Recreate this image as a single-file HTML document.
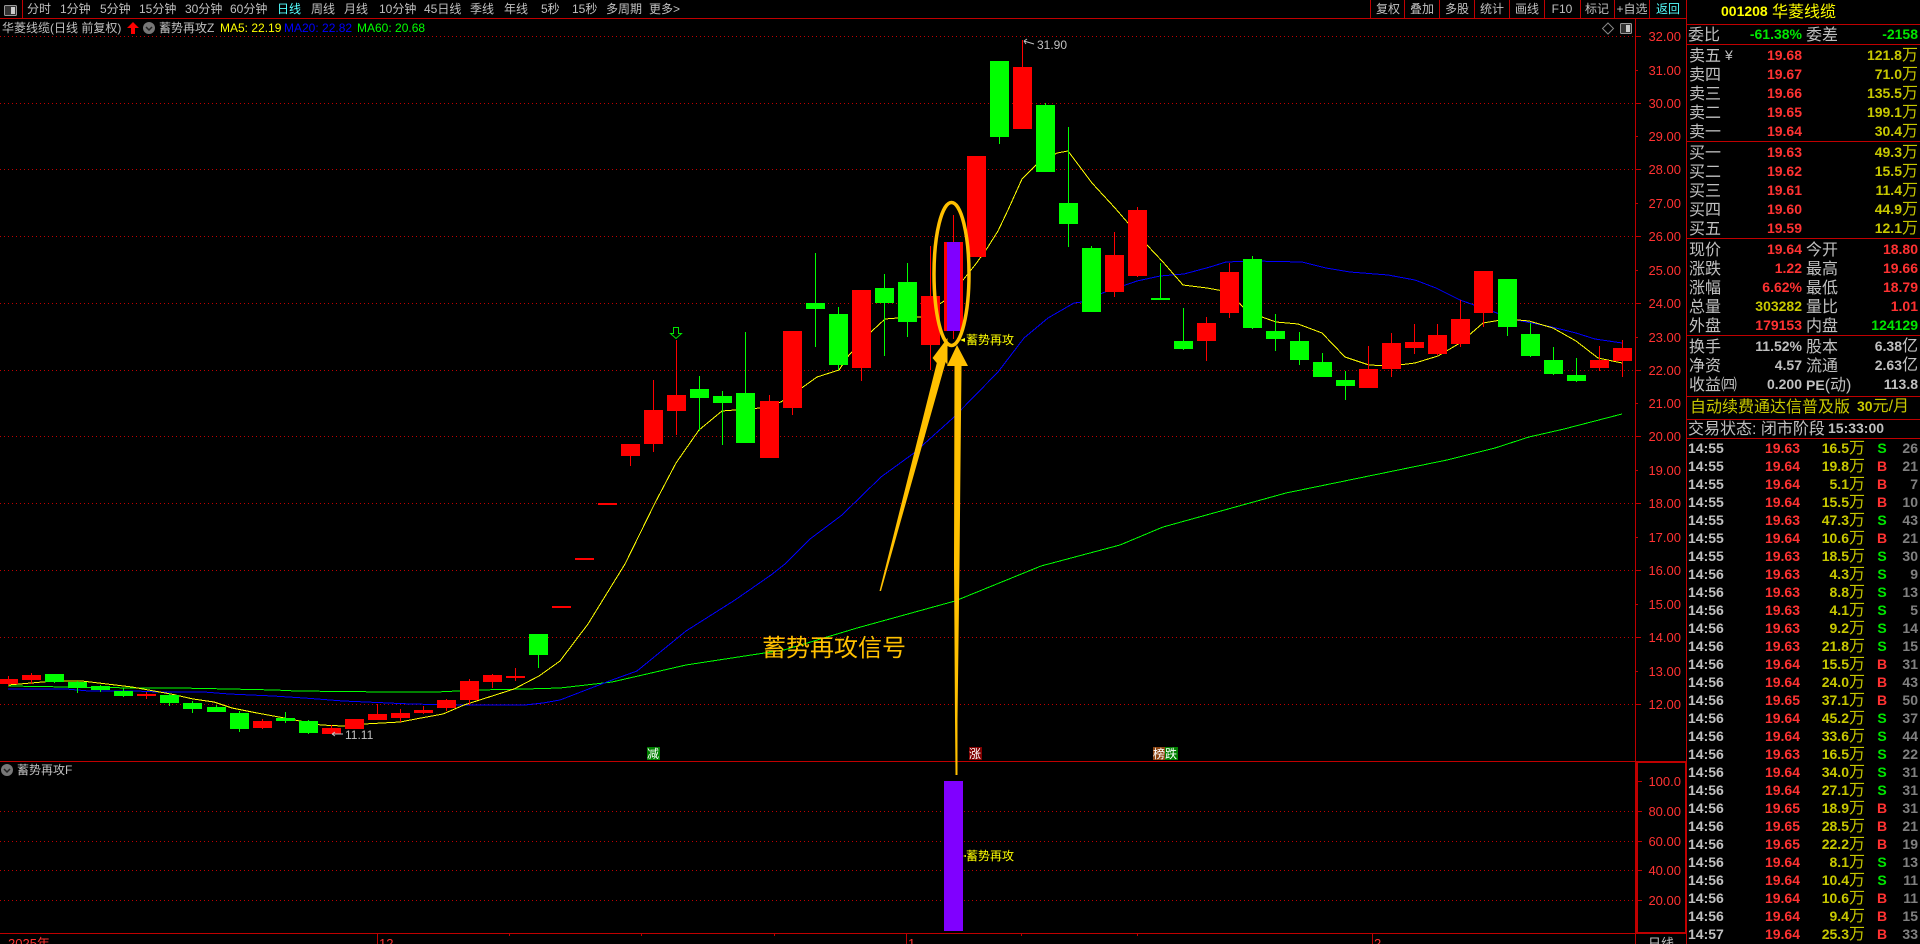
<!DOCTYPE html>
<html><head><meta charset="utf-8"><title>华菱线缆</title>
<style>
html,body{margin:0;padding:0;background:#000;width:1920px;height:944px;overflow:hidden}
svg{position:absolute;left:0;top:0}
text{font-family:"Liberation Sans","WenQuanYi Zen Hei","Noto Sans CJK SC",sans-serif}
.tab{font-size:12px;fill:#c0c0c0}
.ax{font-size:13px;fill:#ff3232;text-anchor:end}
.lb{font-size:16px;fill:#c0c0c0}
.d{font-size:14px;font-weight:bold;text-anchor:end}
.c{text-anchor:middle}
.r{fill:#ff3232}.g{fill:#00e600}.y{fill:#c8c800}.w{fill:#c0c0c0}
.u{font-size:16px;font-weight:normal}
#ticks{position:absolute;left:1688px;top:439px;width:232px;font:bold 14px/18px "Liberation Sans","WenQuanYi Zen Hei",sans-serif}
#ticks div{position:relative;height:18px}
#ticks span{position:absolute;top:0;white-space:nowrap}
.t{left:0;color:#c0c0c0}
.p{right:120px;color:#ff3232}
.q{right:55px;color:#c8c800}
.q small{font-size:16px;font-weight:normal}
.B,.S{left:189px;width:10px;text-align:center}
.B{color:#ff3232}.S{color:#00e600}
.n{right:2px;color:#808080}
</style></head><body>
<svg width="1920" height="944" viewBox="0 0 1920 944">
<!-- grid -->
<g stroke="#c00000" stroke-width="1" stroke-dasharray="1 3" shape-rendering="crispEdges">
<path d="M0 36.5H1635M0 103.5H1635M0 169.5H1635M0 236.5H1635M0 303.5H1635M0 370.5H1635M0 436.5H1635M0 503.5H1635M0 570.5H1635M0 637.5H1635M0 704.5H1635M0 811.5H1635M0 841.5H1635M0 870.5H1635M0 900.5H1635"/>
</g>
<!-- MA lines -->
<g fill="none" stroke-width="1" shape-rendering="crispEdges">
<polyline stroke="#00ff00" points="8,686 68,687 136,688 179,688 229,689 275,690 296,691 389,692 436,692 479,690 525,689 560,688 612,682 686,665 784,650 857,628 955,601 1041,566 1120,545 1163,527 1286,493 1447,460 1495,448 1529,437 1564,429 1622,414"/>
<polyline stroke="#0000ff" points="8,689 66,689 89,691 136,691 157,692 204,692 229,694 273,696 304,698 343,701 366,702 411,704 457,705 525,705 543,703 560,700 612,680 637,671 686,631 735,600 771,575 785,564 810,539 842,515 881,477 914,453 953,418 998,372 1024,338 1048,318 1074,303 1082,302 1105,292 1137,281 1160,276 1184,274 1210,267 1226,262 1253,261 1302,262 1326,268 1350,272 1388,275 1415,280 1436,288 1460,300 1474,305 1517,320 1552,327 1576,333 1595,339 1622,343"/>
<polyline stroke="#ffff00" points="8,685 31,683 54,681 82,681 107,684 132,687 154,691 171,694 193,699 214,702 232,708 257,713 279,717 300,721 321,725 343,726 364,724 382,723 400,722 421,718 443,714 464,705 489,697 514,689 539,676 560,661 588,624 625,564 655,503 676,463 699,430 722,411 735,410 760,408 781,402 803,387 817,377 839,370 849,355 872,331 885,319 898,318 921,317 944,301 963,280 975,265 986,250 998,231 1008,210 1022,179 1036,165 1057,153 1068,151 1092,183 1115,208 1128,223 1147,245 1163,262 1183,285 1207,288 1229,292 1243,307 1262,317 1276,322 1298,324 1322,333 1345,357 1369,365 1391,366 1415,363 1438,356 1460,343 1483,323 1507,319 1529,321 1553,328 1576,341 1598,358 1622,363"/>
</g>
<!-- candles -->
<g shape-rendering="crispEdges">
<path fill="#ff0000" d="M-1 679h19v5h-19zM8 676h1v10h-1zM22 675h19v5h-19zM31 673h1v11h-1zM137 694h19v2h-19zM146 692h1v7h-1zM253 721h19v7h-19zM262 719h1v10h-1zM322 728h19v6h-19zM331 725h1v9h-1zM345 719h19v10h-19zM368 714h19v6h-19zM377 704h1v16h-1zM391 713h19v5h-19zM400 709h1v13h-1zM414 710h19v3h-19zM423 706h1v8h-1zM437 700h19v8h-19zM446 699h1v12h-1zM460 681h19v19h-19zM469 679h1v26h-1zM483 675h19v7h-19zM492 674h1v14h-1zM506 676h19v2h-19zM515 668h1v13h-1zM552 606h19v2h-19zM575 558h19v2h-19zM598 503h19v2h-19zM621 444h19v12h-19zM630 444h1v22h-1zM644 410h19v34h-19zM653 380h1v72h-1zM667 395h19v16h-19zM676 340h1v95h-1zM760 401h19v57h-19zM769 395h1v6h-1zM783 331h19v77h-19zM792 331h1v84h-1zM852 290h19v78h-19zM861 290h1v91h-1zM921 296h19v49h-19zM930 246h1v124h-1zM944 242h19v89h-19zM953 215h1v124h-1zM967 156h19v101h-19zM1013 67h19v62h-19zM1022 40h1v27h-1zM1105 255h19v37h-19zM1114 232h1v65h-1zM1128 210h19v66h-19zM1137 207h1v70h-1zM1197 323h19v18h-19zM1206 317h1v44h-1zM1220 272h19v41h-19zM1229 263h1v55h-1zM1359 369h19v19h-19zM1368 346h1v23h-1zM1382 343h19v26h-19zM1391 333h1v44h-1zM1405 342h19v6h-19zM1414 324h1v30h-1zM1428 335h19v19h-19zM1437 324h1v31h-1zM1451 319h19v25h-19zM1460 300h1v47h-1zM1474 271h19v42h-19zM1483 313h1v14h-1zM1590 360h19v8h-19zM1599 346h1v25h-1zM1613 348h19v13h-19zM1622 340h1v37h-1z"/>
<path fill="#00ff00" d="M45 674h19v8h-19zM54 682h1v1h-1zM68 682h19v6h-19zM77 681h1v12h-1zM91 686h19v4h-19zM100 685h1v7h-1zM114 691h19v5h-19zM123 688h1v9h-1zM160 695h19v8h-19zM169 693h1v13h-1zM183 703h19v6h-19zM192 701h1v12h-1zM207 707h19v5h-19zM216 705h1v7h-1zM230 713h19v16h-19zM239 711h1v21h-1zM276 718h19v3h-19zM285 712h1v11h-1zM299 721h19v12h-19zM308 720h1v14h-1zM529 634h19v21h-19zM538 655h1v13h-1zM690 389h19v9h-19zM699 376h1v55h-1zM713 396h19v7h-19zM722 391h1v54h-1zM736 393h19v50h-19zM745 332h1v61h-1zM806 303h19v6h-19zM815 253h1v94h-1zM829 314h19v51h-19zM838 307h1v63h-1zM875 288h19v15h-19zM884 274h1v82h-1zM898 282h19v40h-19zM907 263h1v74h-1zM990 61h19v76h-19zM999 137h1v7h-1zM1036 105h19v67h-19zM1045 103h1v2h-1zM1059 203h19v21h-19zM1068 127h1v120h-1zM1082 248h19v64h-19zM1091 246h1v2h-1zM1151 298h19v2h-19zM1160 263h1v35h-1zM1174 341h19v8h-19zM1183 308h1v42h-1zM1243 259h19v69h-19zM1252 256h1v73h-1zM1266 331h19v8h-19zM1275 314h1v37h-1zM1290 341h19v19h-19zM1299 332h1v33h-1zM1313 362h19v15h-19zM1322 353h1v9h-1zM1336 380h19v6h-19zM1345 371h1v29h-1zM1498 279h19v48h-19zM1507 327h1v9h-1zM1521 334h19v22h-19zM1530 323h1v34h-1zM1544 360h19v14h-19zM1553 347h1v28h-1zM1567 375h19v6h-19zM1576 358h1v24h-1z"/>
<rect x="947" y="242" width="13" height="89" fill="#8000ff"/>
<rect x="944" y="781" width="19" height="150" fill="#8000ff"/>
</g>
<path d="M673.5 327.5h5v6h3l-5.5 5-5.500-5h3z" fill="none" stroke="#00e600"/>
<!-- frame lines -->
<g stroke="#c00000" stroke-width="1" shape-rendering="crispEdges" fill="none">
<path d="M0 18.500H1686M22.500 0V18M1370.500 0V18M1404.500 0V18M1439.500 0V18M1474.500 0V18M1509.500 0V18M1544.500 0V18M1580.500 0V18M1614.500 0V18M1649.500 0V18"/>
<path d="M1635.500 18V944M0 761.500H1636M0 933.500H1636M1636 781.500h6M1636 811.500h6M1636 841.500h6M1636 870.500h6M1636 900.500h6"/>
<path d="M1635 36.500h6M1635 70.500h3M1635 103.500h6M1635 136.500h3M1635 169.500h6M1635 203.500h3M1635 236.500h6M1635 270.500h3M1635 303.500h6M1635 337.500h3M1635 370.500h6M1635 403.500h3M1635 436.500h6M1635 470.500h3M1635 503.500h6M1635 537.500h3M1635 570.500h6M1635 604.500h3M1635 637.500h6M1635 671.500h3M1635 704.500h6"/>
<path d="M377.500 933V944M906.500 933V944M1372.500 933V944M509.500 933v3M641.500 933v3M774.500 933v3M1021.500 933v3M1137.500 933v3"/>
<path d="M1686.500 0V944"/>
<path stroke-width="2" d="M1636 762h50M1636 933h50M1637 762V933M1686 762V933"/>
<path d="M1687 24.500H1920M1687 44.500H1920M1687 141.500H1920M1687 238.500H1920M1687 335.500H1920M1687 396.500H1920M1687 419.500H1920M1687 438.500H1920"/>
</g>
<!-- toolbar -->
<rect x="4.500" y="5.500" width="12" height="10" rx="1" fill="#333" stroke="#999"/><rect x="11" y="7" width="4" height="7" fill="#ccc"/>
<g class="tabs">
<text class="tab" x="27" y="13">分时</text><text class="tab" x="60" y="13">1分钟</text><text class="tab" x="100" y="13">5分钟</text><text class="tab" x="139" y="13">15分钟</text><text class="tab" x="185" y="13">30分钟</text><text class="tab" x="230" y="13">60分钟</text><text class="tab" x="277" y="13" style="fill:#5ff">日线</text><text class="tab" x="311" y="13">周线</text><text class="tab" x="344" y="13">月线</text><text class="tab" x="379" y="13">10分钟</text><text class="tab" x="424" y="13">45日线</text><text class="tab" x="470" y="13">季线</text><text class="tab" x="504" y="13">年线</text><text class="tab" x="541" y="13">5秒</text><text class="tab" x="572" y="13">15秒</text><text class="tab" x="606" y="13">多周期</text><text class="tab" x="649" y="13">更多&gt;</text>
<text class="tab c" x="1388" y="13">复权</text><text class="tab c" x="1422" y="13">叠加</text><text class="tab c" x="1457" y="13">多股</text><text class="tab c" x="1492" y="13">统计</text><text class="tab c" x="1527" y="13">画线</text><text class="tab c" x="1562" y="13">F10</text><text class="tab c" x="1597" y="13">标记</text><text class="tab c" x="1632" y="13">+自选</text><text class="tab c" x="1668" y="13" style="fill:#5ff">返回</text>
</g>
<!-- info row -->
<text class="tab" x="2" y="32">华菱线缆(日线 前复权)</text>
<path d="M133 22l-6 6h4v6h4v-6h4z" fill="#f00"/>
<circle cx="149" cy="28" r="6" fill="#777"/><path d="M146 27l3 3 3-3" fill="none" stroke="#222" stroke-width="1.500"/>
<text class="tab" x="159" y="32">蓄势再攻Z</text>
<text class="tab" x="220" y="32" style="fill:#ff0">MA5: 22.19</text>
<text class="tab" x="284" y="32" style="fill:#00f">MA20: 22.82</text>
<text class="tab" x="357" y="32" style="fill:#0f0">MA60: 20.68</text>
<path d="M1608 23l5.500 5.500-5.500 5.500-5.500-5.500z" fill="none" stroke="#888"/>
<rect x="1620.500" y="23.500" width="11" height="10" rx="1" fill="#333" stroke="#999"/><rect x="1626" y="25" width="4" height="7" fill="#ccc"/>
<circle cx="7" cy="770" r="6" fill="#777"/><path d="M4 769l3 3 3-3" fill="none" stroke="#222" stroke-width="1.500"/>
<text class="tab" x="17" y="774">蓄势再攻F</text>
<!-- axis -->
<g>
<text class="ax" x="1681" y="41">32.00</text><text class="ax" x="1681" y="75">31.00</text><text class="ax" x="1681" y="108">30.00</text><text class="ax" x="1681" y="141">29.00</text><text class="ax" x="1681" y="174">28.00</text><text class="ax" x="1681" y="208">27.00</text><text class="ax" x="1681" y="241">26.00</text><text class="ax" x="1681" y="275">25.00</text><text class="ax" x="1681" y="308">24.00</text><text class="ax" x="1681" y="342">23.00</text><text class="ax" x="1681" y="375">22.00</text><text class="ax" x="1681" y="408">21.00</text><text class="ax" x="1681" y="441">20.00</text><text class="ax" x="1681" y="475">19.00</text><text class="ax" x="1681" y="508">18.00</text><text class="ax" x="1681" y="542">17.00</text><text class="ax" x="1681" y="575">16.00</text><text class="ax" x="1681" y="609">15.00</text><text class="ax" x="1681" y="642">14.00</text><text class="ax" x="1681" y="676">13.00</text><text class="ax" x="1681" y="709">12.00</text>
<text class="ax" x="1681" y="786">100.0</text><text class="ax" x="1681" y="816">80.00</text><text class="ax" x="1681" y="846">60.00</text><text class="ax" x="1681" y="875">40.00</text><text class="ax" x="1681" y="905">20.00</text>
<text x="8" y="948" style="font-size:13px;fill:#ff3232">2025年</text><text x="379" y="948" style="font-size:13px;fill:#ff3232">12</text><text x="908" y="948" style="font-size:13px;fill:#ff3232">1</text><text x="1374" y="948" style="font-size:13px;fill:#ff3232">2</text>
<text class="tab" x="1648" y="948" style="font-size:13px">日线</text>
</g>
<!-- chart marks -->
<text x="1037" y="49" style="font-size:12px;fill:#c0c0c0">31.90</text>
<path d="M1024 41l10 3M1024 41l3-2M1024 41l2 3" stroke="#c0c0c0" fill="none"/>
<text x="345" y="739" style="font-size:12px;fill:#c0c0c0">11.11</text>
<path d="M343 734h-11M332 734l3-2M332 734l3 2" stroke="#c0c0c0" fill="none"/>
<text x="966" y="344" style="font-size:12px;fill:#ff0">蓄势再攻</text><path d="M960 340l5-2v4z" fill="#ff0"/>
<text x="966" y="860" style="font-size:12px;fill:#ff0">蓄势再攻</text><path d="M963 856l3-1v2z" fill="#ff0"/>
<rect x="647" y="747" width="13" height="13" fill="#008000"/><text x="647" y="758" style="font-size:12px;fill:#fff">减</text>
<rect x="969" y="747" width="13" height="13" fill="#800000"/><text x="969" y="758" style="font-size:12px;fill:#fff">涨</text>
<rect x="1153" y="747" width="12" height="13" fill="#8b4513"/><text x="1153" y="758" style="font-size:12px;fill:#fff">榜</text>
<rect x="1165" y="747" width="13" height="13" fill="#008000"/><text x="1165" y="758" style="font-size:12px;fill:#fff">跌</text>
<!-- gold annotation -->
<ellipse cx="951.500" cy="274" rx="17.500" ry="71.500" fill="none" stroke="#ffc000" stroke-width="3.500"/>
<polygon fill="#ffc000" points="955.500,775 955,720 954,564 954.500,366 947,366 957,345 968,366 961.500,366 959.500,564 957.500,720 957.500,775"/>
<polygon fill="#ffc000" points="879.500,591 936.800,363 932.500,358 947.500,338 947.500,365 945.700,362 881,591"/>
<text x="762" y="656" style="font-size:24px;fill:#ffc000;font-family:'Noto Sans CJK SC','WenQuanYi Zen Hei',sans-serif">蓄势再攻信号</text>
<!-- right panel -->
<text x="1721" y="16" style="font-size:14px;font-weight:bold;fill:#ff0">001208</text><text x="1772" y="17" style="font-size:16px;fill:#ff0">华菱线缆</text>
<text class="lb" x="1688" y="40">委比</text><text class="d g" x="1802" y="39">-61.38%</text><text class="lb" x="1806" y="40">委差</text><text class="d g" x="1918" y="39">-2158</text>
<g>
<text class="lb" x="1689" y="61">卖五</text><text x="1725" y="60" style="font-size:14px;fill:#c0c0c0">¥</text><text class="d r" x="1802" y="60">19.68</text><text class="d y" x="1918" y="60">121.8<tspan class="u">万</tspan></text>
<text class="lb" x="1689" y="80">卖四</text><text class="d r" x="1802" y="79">19.67</text><text class="d y" x="1918" y="79">71.0<tspan class="u">万</tspan></text>
<text class="lb" x="1689" y="99">卖三</text><text class="d r" x="1802" y="98">19.66</text><text class="d y" x="1918" y="98">135.5<tspan class="u">万</tspan></text>
<text class="lb" x="1689" y="118">卖二</text><text class="d r" x="1802" y="117">19.65</text><text class="d y" x="1918" y="117">199.1<tspan class="u">万</tspan></text>
<text class="lb" x="1689" y="137">卖一</text><text class="d r" x="1802" y="136">19.64</text><text class="d y" x="1918" y="136">30.4<tspan class="u">万</tspan></text>
<text class="lb" x="1689" y="158">买一</text><text class="d r" x="1802" y="157">19.63</text><text class="d y" x="1918" y="157">49.3<tspan class="u">万</tspan></text>
<text class="lb" x="1689" y="177">买二</text><text class="d r" x="1802" y="176">19.62</text><text class="d y" x="1918" y="176">15.5<tspan class="u">万</tspan></text>
<text class="lb" x="1689" y="196">买三</text><text class="d r" x="1802" y="195">19.61</text><text class="d y" x="1918" y="195">11.4<tspan class="u">万</tspan></text>
<text class="lb" x="1689" y="215">买四</text><text class="d r" x="1802" y="214">19.60</text><text class="d y" x="1918" y="214">44.9<tspan class="u">万</tspan></text>
<text class="lb" x="1689" y="234">买五</text><text class="d r" x="1802" y="233">19.59</text><text class="d y" x="1918" y="233">12.1<tspan class="u">万</tspan></text>
<text class="lb" x="1689" y="255">现价</text><text class="d r" x="1802" y="254">19.64</text><text class="lb" x="1806" y="255">今开</text><text class="d r" x="1918" y="254">18.80</text>
<text class="lb" x="1689" y="274">涨跌</text><text class="d r" x="1802" y="273">1.22</text><text class="lb" x="1806" y="274">最高</text><text class="d r" x="1918" y="273">19.66</text>
<text class="lb" x="1689" y="293">涨幅</text><text class="d r" x="1802" y="292">6.62%</text><text class="lb" x="1806" y="293">最低</text><text class="d r" x="1918" y="292">18.79</text>
<text class="lb" x="1689" y="312">总量</text><text class="d y" x="1802" y="311">303282</text><text class="lb" x="1806" y="312">量比</text><text class="d r" x="1918" y="311">1.01</text>
<text class="lb" x="1689" y="331">外盘</text><text class="d r" x="1802" y="330">179153</text><text class="lb" x="1806" y="331">内盘</text><text class="d g" x="1918" y="330">124129</text>
<text class="lb" x="1689" y="352">换手</text><text class="d w" x="1802" y="351">11.52%</text><text class="lb" x="1806" y="352">股本</text><text class="d w" x="1918" y="351">6.38<tspan class="u">亿</tspan></text>
<text class="lb" x="1689" y="371">净资</text><text class="d w" x="1802" y="370">4.57</text><text class="lb" x="1806" y="371">流通</text><text class="d w" x="1918" y="370">2.63<tspan class="u">亿</tspan></text>
<text class="lb" x="1689" y="390">收益㈣</text><text class="d w" x="1802" y="389">0.200</text><text class="lb" x="1806" y="390"><tspan style="font-size:14px;font-weight:bold">PE</tspan>(动)</text><text class="d w" x="1918" y="389">113.8</text>
<text x="1690" y="412" style="font-size:16px;fill:#c8c800">自动续费通达信普及版</text><text x="1857" y="411" style="font-size:14px;font-weight:bold;fill:#c8c800">30<tspan class="u">元/月</tspan></text>
<text class="lb" x="1688" y="434">交易状态: 闭市阶段</text><text x="1828" y="433" style="font-size:14px;font-weight:bold;fill:#c0c0c0">15:33:00</text>
</g>
</svg>
<div id="ticks">
<div><span class="t">14:55</span><span class="p">19.63</span><span class="q">16.5<small>万</small></span><span class="S">S</span><span class="n">26</span></div>
<div><span class="t">14:55</span><span class="p">19.64</span><span class="q">19.8<small>万</small></span><span class="B">B</span><span class="n">21</span></div>
<div><span class="t">14:55</span><span class="p">19.64</span><span class="q">5.1<small>万</small></span><span class="B">B</span><span class="n">7</span></div>
<div><span class="t">14:55</span><span class="p">19.64</span><span class="q">15.5<small>万</small></span><span class="B">B</span><span class="n">10</span></div>
<div><span class="t">14:55</span><span class="p">19.63</span><span class="q">47.3<small>万</small></span><span class="S">S</span><span class="n">43</span></div>
<div><span class="t">14:55</span><span class="p">19.64</span><span class="q">10.6<small>万</small></span><span class="B">B</span><span class="n">21</span></div>
<div><span class="t">14:55</span><span class="p">19.63</span><span class="q">18.5<small>万</small></span><span class="S">S</span><span class="n">30</span></div>
<div><span class="t">14:56</span><span class="p">19.63</span><span class="q">4.3<small>万</small></span><span class="S">S</span><span class="n">9</span></div>
<div><span class="t">14:56</span><span class="p">19.63</span><span class="q">8.8<small>万</small></span><span class="S">S</span><span class="n">13</span></div>
<div><span class="t">14:56</span><span class="p">19.63</span><span class="q">4.1<small>万</small></span><span class="S">S</span><span class="n">5</span></div>
<div><span class="t">14:56</span><span class="p">19.63</span><span class="q">9.2<small>万</small></span><span class="S">S</span><span class="n">14</span></div>
<div><span class="t">14:56</span><span class="p">19.63</span><span class="q">21.8<small>万</small></span><span class="S">S</span><span class="n">15</span></div>
<div><span class="t">14:56</span><span class="p">19.64</span><span class="q">15.5<small>万</small></span><span class="B">B</span><span class="n">31</span></div>
<div><span class="t">14:56</span><span class="p">19.64</span><span class="q">24.0<small>万</small></span><span class="B">B</span><span class="n">43</span></div>
<div><span class="t">14:56</span><span class="p">19.65</span><span class="q">37.1<small>万</small></span><span class="B">B</span><span class="n">50</span></div>
<div><span class="t">14:56</span><span class="p">19.64</span><span class="q">45.2<small>万</small></span><span class="S">S</span><span class="n">37</span></div>
<div><span class="t">14:56</span><span class="p">19.64</span><span class="q">33.6<small>万</small></span><span class="S">S</span><span class="n">44</span></div>
<div><span class="t">14:56</span><span class="p">19.63</span><span class="q">16.5<small>万</small></span><span class="S">S</span><span class="n">22</span></div>
<div><span class="t">14:56</span><span class="p">19.64</span><span class="q">34.0<small>万</small></span><span class="S">S</span><span class="n">31</span></div>
<div><span class="t">14:56</span><span class="p">19.64</span><span class="q">27.1<small>万</small></span><span class="S">S</span><span class="n">31</span></div>
<div><span class="t">14:56</span><span class="p">19.65</span><span class="q">18.9<small>万</small></span><span class="B">B</span><span class="n">31</span></div>
<div><span class="t">14:56</span><span class="p">19.65</span><span class="q">28.5<small>万</small></span><span class="B">B</span><span class="n">21</span></div>
<div><span class="t">14:56</span><span class="p">19.65</span><span class="q">22.2<small>万</small></span><span class="B">B</span><span class="n">19</span></div>
<div><span class="t">14:56</span><span class="p">19.64</span><span class="q">8.1<small>万</small></span><span class="S">S</span><span class="n">13</span></div>
<div><span class="t">14:56</span><span class="p">19.64</span><span class="q">10.4<small>万</small></span><span class="S">S</span><span class="n">11</span></div>
<div><span class="t">14:56</span><span class="p">19.64</span><span class="q">10.6<small>万</small></span><span class="B">B</span><span class="n">11</span></div>
<div><span class="t">14:56</span><span class="p">19.64</span><span class="q">9.4<small>万</small></span><span class="B">B</span><span class="n">15</span></div>
<div><span class="t">14:57</span><span class="p">19.64</span><span class="q">25.3<small>万</small></span><span class="B">B</span><span class="n">33</span></div>
</div>
</body></html>
